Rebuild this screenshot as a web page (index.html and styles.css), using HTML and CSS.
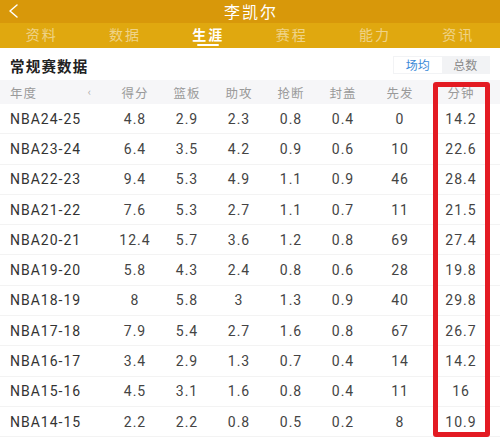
FILE: index.html
```html
<!DOCTYPE html>
<html lang="zh">
<head>
<meta charset="utf-8">
<link rel="stylesheet" href="styles.css">
</head>
<body>
<div class="app">
  <header class="topbar">
    <svg class="back" width="14" height="16" viewBox="0 0 14 16"><polyline points="11,2 4,8 11,14" fill="none" stroke="#fff" stroke-width="1.5" stroke-linecap="round" stroke-linejoin="round"/></svg>
    <div class="title">李凯尔</div>
  </header>
  <nav class="tabs">
    <div class="tab">资料</div>
    <div class="tab">数据</div>
    <div class="tab active">生涯</div>
    <div class="tab">赛程</div>
    <div class="tab">能力</div>
    <div class="tab">资讯</div>
  </nav>
  <section class="section-head">
    <div class="section-title">常规赛数据</div>
    <div class="seg">
      <div class="seg-item on">场均</div>
      <div class="seg-item">总数</div>
    </div>
  </section>
  <div class="table">
    <div class="row head">
      <div class="c year"><span>年度</span><span class="mark">‹</span></div>
      <div class="c">得分</div><div class="c">篮板</div><div class="c">助攻</div><div class="c">抢断</div><div class="c">封盖</div><div class="c">先发</div><div class="c">分钟</div>
    </div>
    <div class="row"><div class="c year">NBA24-25</div><div class="c">4.8</div><div class="c">2.9</div><div class="c">2.3</div><div class="c">0.8</div><div class="c">0.4</div><div class="c">0</div><div class="c">14.2</div></div>
    <div class="row"><div class="c year">NBA23-24</div><div class="c">6.4</div><div class="c">3.5</div><div class="c">4.2</div><div class="c">0.9</div><div class="c">0.6</div><div class="c">10</div><div class="c">22.6</div></div>
    <div class="row"><div class="c year">NBA22-23</div><div class="c">9.4</div><div class="c">5.3</div><div class="c">4.9</div><div class="c">1.1</div><div class="c">0.9</div><div class="c">46</div><div class="c">28.4</div></div>
    <div class="row"><div class="c year">NBA21-22</div><div class="c">7.6</div><div class="c">5.3</div><div class="c">2.7</div><div class="c">1.1</div><div class="c">0.7</div><div class="c">11</div><div class="c">21.5</div></div>
    <div class="row"><div class="c year">NBA20-21</div><div class="c">12.4</div><div class="c">5.7</div><div class="c">3.6</div><div class="c">1.2</div><div class="c">0.8</div><div class="c">69</div><div class="c">27.4</div></div>
    <div class="row"><div class="c year">NBA19-20</div><div class="c">5.8</div><div class="c">4.3</div><div class="c">2.4</div><div class="c">0.8</div><div class="c">0.6</div><div class="c">28</div><div class="c">19.8</div></div>
    <div class="row"><div class="c year">NBA18-19</div><div class="c">8</div><div class="c">5.8</div><div class="c">3</div><div class="c">1.3</div><div class="c">0.9</div><div class="c">40</div><div class="c">29.8</div></div>
    <div class="row"><div class="c year">NBA17-18</div><div class="c">7.9</div><div class="c">5.4</div><div class="c">2.7</div><div class="c">1.6</div><div class="c">0.8</div><div class="c">67</div><div class="c">26.7</div></div>
    <div class="row"><div class="c year">NBA16-17</div><div class="c">3.4</div><div class="c">2.9</div><div class="c">1.3</div><div class="c">0.7</div><div class="c">0.4</div><div class="c">14</div><div class="c">14.2</div></div>
    <div class="row"><div class="c year">NBA15-16</div><div class="c">4.5</div><div class="c">3.1</div><div class="c">1.6</div><div class="c">0.8</div><div class="c">0.4</div><div class="c">11</div><div class="c">16</div></div>
    <div class="row"><div class="c year">NBA14-15</div><div class="c">2.2</div><div class="c">2.2</div><div class="c">0.8</div><div class="c">0.5</div><div class="c">0.2</div><div class="c">8</div><div class="c">10.9</div></div>
    <div class="highlight"></div>
  </div>
</div>
</body>
</html>
```
FILE: styles.css
```css
* { box-sizing: border-box; }
html, body { margin: 0; padding: 0; }
body {
  width: 500px;
  height: 440px;
  overflow: hidden;
  background: #fff;
  font-family: Roboto, "Noto Sans CJK SC", sans-serif;
}
.app { width: 500px; }
.topbar {
  height: 23px;
  background: #d8980a;
  display: flex;
  align-items: center;
  justify-content: center;
  position: relative;
}
.back { position: absolute; left: 6px; top: 3px; }
.title {
  color: #fff;
  font-family: "Noto Sans CJK SC", sans-serif;
  font-size: 16px;
  line-height: 23px;
  letter-spacing: 2px;
  margin-left: 2px;
}
.tabs {
  height: 25px;
  background: #e0a80f;
  display: grid;
  grid-template-columns: repeat(6, 1fr);
}
.tab {
  font-family: "Noto Sans CJK SC", sans-serif;
  font-size: 14px;
  color: rgba(255, 255, 255, 0.5);
  text-align: center;
  line-height: 23px;
  letter-spacing: 2px;
  position: relative;
}
.tab.active { color: #fff; font-weight: 700; }
.tab.active::after {
  content: "";
  position: absolute;
  left: 50%;
  margin-left: -11px;
  bottom: 2px;
  width: 22px;
  height: 2.5px;
  border-radius: 2px;
  background: #fff;
}
.section-head {
  height: 32px;
  display: flex;
  align-items: center;
  justify-content: space-between;
  padding: 0 10px 0 10px;
}
.section-title {
  font-family: "Noto Sans CJK SC", sans-serif;
  font-weight: 700;
  font-size: 14.5px;
  color: #222;
  letter-spacing: 1.2px;
  margin-top: 2px;
}
.seg {
  display: flex;
  background: #f2f3f5;
  height: 18px;
  width: 97px;
  margin-top: 1px;
  padding: 1px;
}
.seg-item {
  flex: 1;
  font-family: "Noto Sans CJK SC", sans-serif;
  font-size: 12px;
  line-height: 16px;
  text-align: center;
  color: #8a8a8a;
}
.seg-item.on { background: #fff; color: #3b8ad8; }
.table { position: relative; }
.row {
  display: grid;
  grid-template-columns: 109px 52px 52px 52px 52px 52px 62px 60px;
  height: 30.3px;
  align-items: center;
  border-bottom: 1px solid #f3f3f3;
  font-size: 14px;
  color: #444;
  letter-spacing: 1px;
}
.row.head {
  height: 24px;
  background: #f6f6f8;
  border-bottom: none;
  font-family: "Noto Sans CJK SC", sans-serif;
  font-size: 12.5px;
  color: #9a9a9a;
}
.c { text-align: center; }
.c.year {
  text-align: left;
  padding-left: 10px;
  color: #333;
}
.row.head .c.year {
  color: #9a9a9a;
  display: flex;
  justify-content: space-between;
  padding-right: 17px;
}
.mark { font-size: 11px; color: #aaa; }
.highlight {
  position: absolute;
  left: 433px;
  top: 2px;
  width: 57px;
  height: 355px;
  border: 5px solid #e31b23;
  border-radius: 3px;
}
```
